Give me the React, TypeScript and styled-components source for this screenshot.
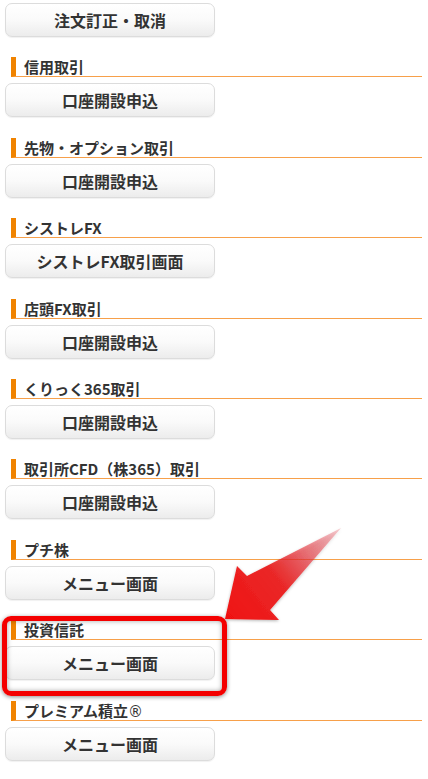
import React from "react";
import styled, { createGlobalStyle } from "styled-components";

const Global = createGlobalStyle`
  html, body { margin: 0; padding: 0; background: #fff; }
  body { font-family: "Noto Sans CJK JP", "Noto Sans", sans-serif; }
`;

const Page = styled.div`
  position: relative;
  width: 428px;
  height: 779px;
  overflow: hidden;
  padding: 3px 6px 0 5px;
  box-sizing: border-box;
  background: #fff;
`;

const Section = styled.section`
  position: relative;
  margin-top: 20.4px;
`;

const Heading = styled.h2`
  margin: 0 0 6px 6px;
  height: 19px;
  box-sizing: content-box;
  border-left: 5px solid #f08300;
  border-bottom: 1px solid #f7a04a;
  padding-left: 8px;
  font-size: 15px;
  line-height: 19px;
  font-weight: 700;
  color: #333;
  white-space: nowrap;
`;

const Mark = styled.span`
  font-family: "DejaVu Sans", sans-serif;
  font-weight: 400;
  font-size: 15px;
`;

const MenuButton = styled.button`
  display: flex;
  align-items: center;
  justify-content: center;
  box-sizing: border-box;
  width: 210px;
  height: 34px;
  padding: 0;
  border: 1px solid #dcdcdc;
  border-radius: 7px;
  background: linear-gradient(#ffffff 0%, #fafafa 50%, #ececec 100%);
  box-shadow: 0 1px 1px rgba(0, 0, 0, 0.06);
  font-family: "Noto Sans CJK JP", "Noto Sans", sans-serif;
  font-size: 16px;
  font-weight: 700;
  color: #333;
  cursor: pointer;
`;

const Highlight = styled.div`
  position: absolute;
  left: -3px;
  top: -4px;
  width: 225px;
  height: 80px;
  box-sizing: border-box;
  border: 5px solid #f40000;
  border-radius: 9px;
  box-shadow: 0 1px 4px rgba(0, 0, 0, 0.45), inset 0 0 5px rgba(0, 0, 0, 0.35);
  pointer-events: none;
`;

const ArrowSvg = styled.svg`
  position: absolute;
  left: 0;
  top: 0;
  pointer-events: none;
`;

type Item = { title: React.ReactNode; key: string; label: string; highlight?: boolean };

const items: Item[] = [
  { key: "a", title: "信用取引", label: "口座開設申込" },
  { key: "b", title: "先物・オプション取引", label: "口座開設申込" },
  { key: "c", title: "シストレFX", label: "シストレFX取引画面" },
  { key: "d", title: "店頭FX取引", label: "口座開設申込" },
  { key: "e", title: "くりっく365取引", label: "口座開設申込" },
  { key: "f", title: "取引所CFD（株365）取引", label: "口座開設申込" },
  { key: "g", title: "プチ株", label: "メニュー画面" },
  { key: "h", title: "投資信託", label: "メニュー画面", highlight: true },
  {
    key: "i",
    title: (
      <>
        プレミアム積立<Mark>®</Mark>
      </>
    ),
    label: "メニュー画面",
  },
];

export default function App() {
  return (
    <>
      <Global />
      <Page>
        <MenuButton>注文訂正・取消</MenuButton>
        {items.map((it) => (
          <Section key={it.key}>
            <Heading>{it.title}</Heading>
            <MenuButton>{it.label}</MenuButton>
            {it.highlight && <Highlight />}
          </Section>
        ))}
        <ArrowSvg width="428" height="779" viewBox="0 0 428 779">
          <defs>
            <linearGradient id="arrowGrad" x1="225" y1="619" x2="341" y2="528" gradientUnits="userSpaceOnUse">
              <stop offset="0" stopColor="#f01010" stopOpacity="1" />
              <stop offset="0.45" stopColor="#ea2020" stopOpacity="0.95" />
              <stop offset="1" stopColor="#e04050" stopOpacity="0.25" />
            </linearGradient>
            <filter id="arrowShadow" x="-20%" y="-20%" width="140%" height="140%">
              <feDropShadow dx="0" dy="1" stdDeviation="1.5" floodColor="#000" floodOpacity="0.3" />
            </filter>
          </defs>
          <polygon
            points="341,528 247,576 237,566 225,619 279,620 270,610"
            fill="url(#arrowGrad)"
            filter="url(#arrowShadow)"
          />
        </ArrowSvg>
      </Page>
    </>
  );
}
